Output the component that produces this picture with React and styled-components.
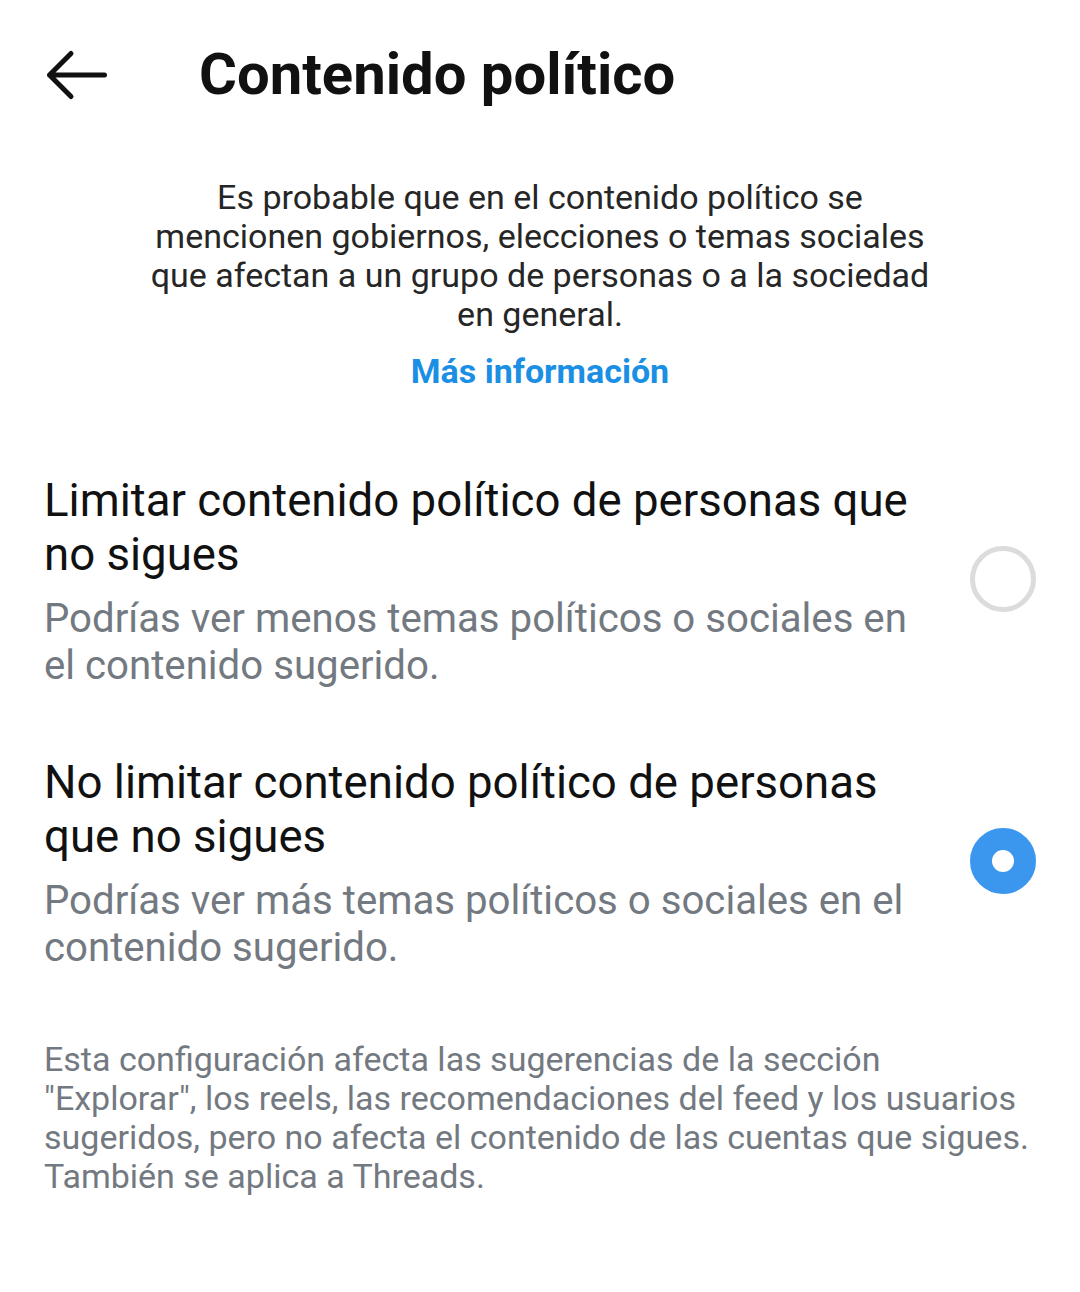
import React from "react";
import styled, { createGlobalStyle } from "styled-components";

const Global = createGlobalStyle`
  html, body { margin: 0; padding: 0; background: #fff; }
  body { font-family: Roboto, "Noto Sans", Arial, sans-serif; -webkit-font-smoothing: antialiased; }
`;

const Page = styled.div`
  width: 1080px;
  min-height: 1292px;
  background: #fff;
  box-sizing: border-box;
`;

const Header = styled.header`
  display: flex;
  align-items: center;
  height: 150px;
  padding-left: 45px;
  box-sizing: border-box;
`;

const BackButton = styled.button`
  border: 0;
  background: none;
  padding: 0;
  width: 64px;
  height: 52px;
  display: flex;
  align-items: center;
  cursor: pointer;
`;

const Title = styled.h1`
  margin: 0 0 2px 90px;
  font-size: 58px;
  line-height: 70px;
  font-weight: 700;
  color: #111;
  letter-spacing: 0;
  white-space: nowrap;
`;

const Intro = styled.section`
  display: flex;
  flex-direction: column;
  align-items: center;
  padding-top: 28px;
  text-align: center;
`;

const IntroText = styled.p`
  margin: 0;
  font-size: 34px;
  line-height: 39px;
  color: #262626;
  white-space: nowrap;
`;

const Link = styled.a`
  margin-top: 18px;
  font-size: 34px;
  line-height: 39px;
  font-weight: 700;
  color: #1a8fe3;
  text-decoration: none;
`;

const Options = styled.div`
  display: flex;
  flex-direction: column;
  gap: 67px;
  margin-top: 83px;
  padding: 0 44px 0 44px;
`;

const Option = styled.label`
  display: flex;
  align-items: center;
  justify-content: space-between;
  cursor: pointer;
`;

const OptionText = styled.div`
  white-space: nowrap;
`;

const OptionTitle = styled.div`
  font-size: 45.6px;
  line-height: 54px;
  color: #111;
`;

const OptionSub = styled.div`
  font-size: 40.2px;
  line-height: 47px;
  color: #737980;
  margin-top: 13px;
`;

const Radio = styled.span`
  width: 66px;
  height: 66px;
  margin-bottom: 5px;
  border-radius: 50%;
  box-sizing: border-box;
  flex-shrink: 0;
  border: ${(p) => (p.$checked ? "22px solid #3b97ee" : "5px solid #dcdcdc")};
  background: #fff;
`;

const Footer = styled.p`
  margin: 69px 0 0;
  padding: 0 44px;
  font-size: 34px;
  line-height: 39px;
  color: #737980;
  white-space: nowrap;
`;

const Lines = ({ lines }) =>
  lines.map((l, i) => (
    <React.Fragment key={i}>
      {i > 0 && <br />}
      {l}
    </React.Fragment>
  ));

const options = [
  {
    title: ["Limitar contenido político de personas que", "no sigues"],
    sub: ["Podrías ver menos temas políticos o sociales en", "el contenido sugerido."],
    checked: false,
  },
  {
    title: ["No limitar contenido político de personas", "que no sigues"],
    sub: ["Podrías ver más temas políticos o sociales en el", "contenido sugerido."],
    checked: true,
  },
];

export default function App() {
  return (
    <Page>
      <Global />
      <Header>
        <BackButton aria-label="Atrás">
          <svg width="64" height="52" viewBox="0 0 64 52" fill="none">
            <path d="M59.5 26H4.5M26 4.5L4.5 26 26 47.5" stroke="#111" strokeWidth="5" strokeLinecap="round" strokeLinejoin="round" />
          </svg>
        </BackButton>
        <Title>Contenido político</Title>
      </Header>
      <Intro>
        <IntroText>
          <Lines
            lines={[
              "Es probable que en el contenido político se",
              "mencionen gobiernos, elecciones o temas sociales",
              "que afectan a un grupo de personas o a la sociedad",
              "en general.",
            ]}
          />
        </IntroText>
        <Link href="#">Más información</Link>
      </Intro>
      <Options>
        {options.map((o, i) => (
          <Option key={i}>
            <OptionText>
              <OptionTitle><Lines lines={o.title} /></OptionTitle>
              <OptionSub><Lines lines={o.sub} /></OptionSub>
            </OptionText>
            <Radio $checked={o.checked} />
          </Option>
        ))}
      </Options>
      <Footer>
        <Lines
          lines={[
            "Esta configuración afecta las sugerencias de la sección",
            "\"Explorar\", los reels, las recomendaciones del feed y los usuarios",
            "sugeridos, pero no afecta el contenido de las cuentas que sigues.",
            "También se aplica a Threads.",
          ]}
        />
      </Footer>
    </Page>
  );
}
